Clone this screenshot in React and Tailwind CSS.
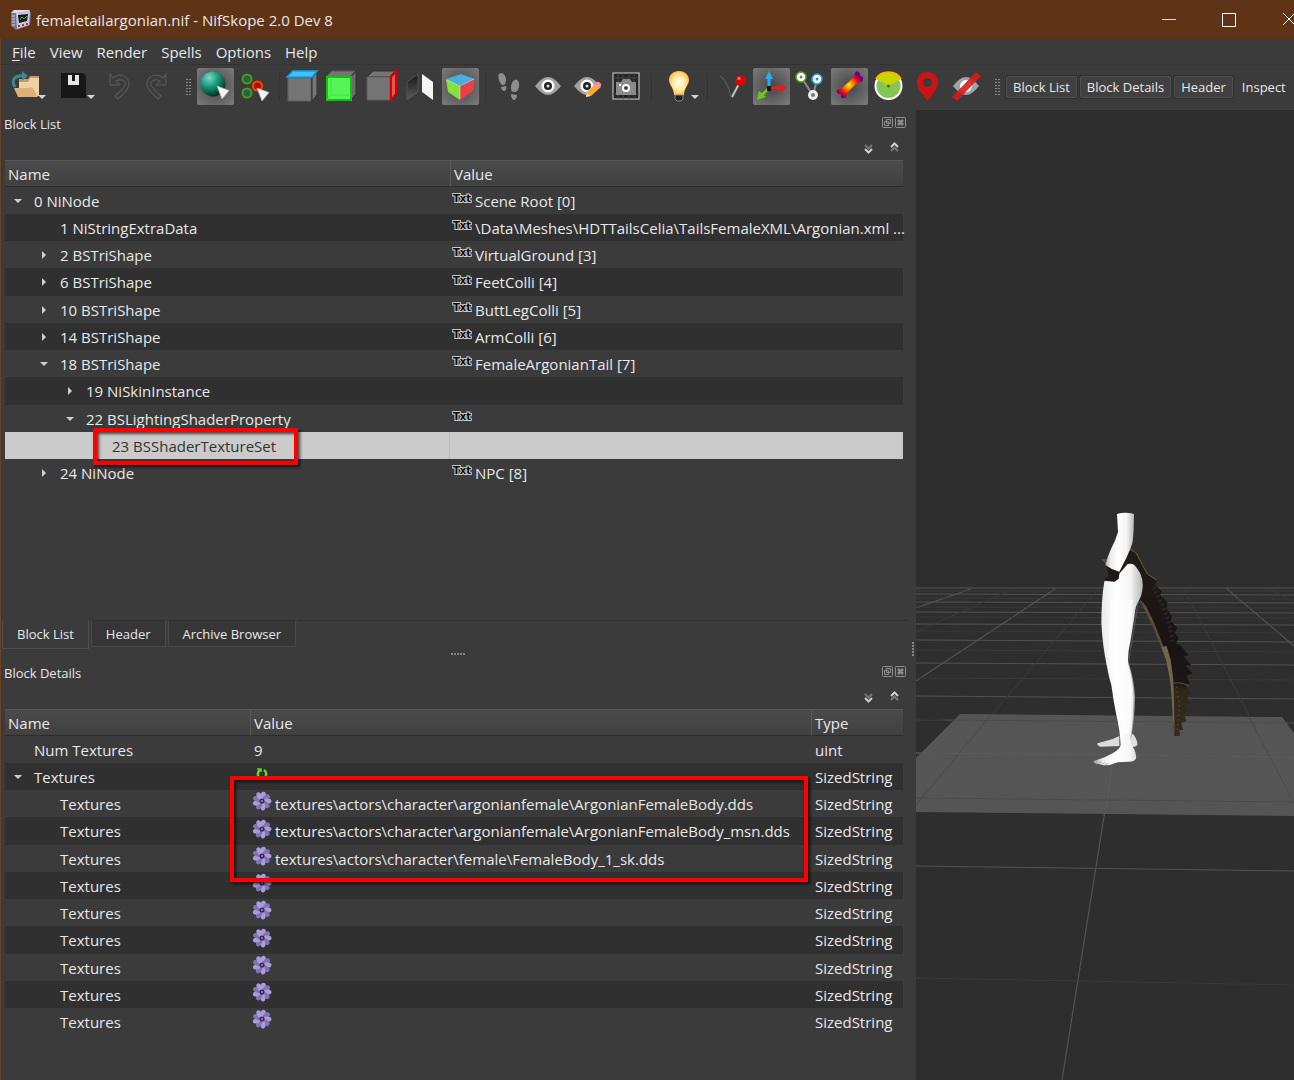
import React, { useState } from 'react';

// ---------- data ----------

const blocks = [
  { id: '0', depth: 0, open: true, name: '0 NiNode', txt: true, value: 'Scene Root [0]' },
  { id: '1', depth: 1, name: '1 NiStringExtraData', txt: true, value: '\\Data\\Meshes\\HDTTailsCelia\\TailsFemaleXML\\Argonian.xml ...' },
  { id: '2', depth: 1, open: false, name: '2 BSTriShape', txt: true, value: 'VirtualGround [3]' },
  { id: '6', depth: 1, open: false, name: '6 BSTriShape', txt: true, value: 'FeetColli [4]' },
  { id: '10', depth: 1, open: false, name: '10 BSTriShape', txt: true, value: 'ButtLegColli [5]' },
  { id: '14', depth: 1, open: false, name: '14 BSTriShape', txt: true, value: 'ArmColli [6]' },
  { id: '18', depth: 1, open: true, name: '18 BSTriShape', txt: true, value: 'FemaleArgonianTail [7]' },
  { id: '19', depth: 2, open: false, name: '19 NiSkinInstance' },
  { id: '22', depth: 2, open: true, name: '22 BSLightingShaderProperty', txt: true, value: '' },
  { id: '23', depth: 3, name: '23 BSShaderTextureSet' },
  { id: '24', depth: 1, open: false, name: '24 NiNode', txt: true, value: 'NPC [8]' },
];

const textures = [
  'textures\\actors\\character\\argonianfemale\\ArgonianFemaleBody.dds',
  'textures\\actors\\character\\argonianfemale\\ArgonianFemaleBody_msn.dds',
  'textures\\actors\\character\\female\\FemaleBody_1_sk.dds',
  '',
  '',
  '',
  '',
  '',
  '',
];

const indent = ['pl-0', 'pl-[26px]', 'pl-[52px]', 'pl-[78px]'];

// ---------- small icons ----------

const AppIcon = () => (
  <svg width="22" height="20" viewBox="0 0 22 20">
    <path d="M1 3 L4 0 L19 0 L21 3 L20 15 L6 20 L1 16 Z" fill="#77738f" />
    <path d="M6 3 L20 1 L19 15 L7 19 Z" fill="#c9c5de" />
    <path d="M1 3 L4 0 L19 0 L20 1 L6 3 Z" fill="#dedbea" />
    <path d="M8 5 L18 4 L17 11 L9 13 Z" fill="#0e1a14" />
    <path d="M10 10 L12 7 L14 9 L17 6" stroke="#3fae5c" fill="none" />
    <path d="M2 6h3M2 9h3M2 12h3M2 15h3" stroke="#d8d5e6" />
    <path d="M8 16h2M12 15h2M16 14h2" stroke="#b0304c" strokeWidth="2" />
  </svg>
);

const Caret = () => <path d="M0 0h8l-4 4z" fill="#d5d5d5" />;

const OpenIcon = () => (
  <svg width="37" height="37" viewBox="0 0 37 37">
    <path d="M10 11h9l2-3h9v20H10z" fill="#c99a5b" />
    <path d="M10 14h9l2-4h9v18H10z" fill="#f0d2a2" />
    <path d="M5 20h14l4-1l6 10H9z" fill="#dcb27a" />
    <path d="M6 19C1 11 7 7 15 8" fill="none" stroke="#3b8796" strokeWidth="3" />
    <path d="M13 3l6 5-6 5z" fill="#3b8796" />
    <g transform="translate(29 27)"><Caret /></g>
  </svg>
);

const SaveIcon = () => (
  <svg width="37" height="37" viewBox="0 0 37 37">
    <path d="M3 5h22l3 3v22H3z" fill="#171717" />
    <path d="M10 7h11v10H10z" fill="#e6e6e6" />
    <path d="M14 7h3v6h-3z" fill="#171717" />
    <g transform="translate(29 27)"><Caret /></g>
  </svg>
);

const UndoShape = () => (
  <path
    d="M6 6v11h10l-4-4c5-3 10 0 9 4c-1 3-6 7-10 11l3 3c5-5 11-9 11-15c0-8-9-12-16-6z"
    fill="#3c3c3c"
    stroke="#545454"
    strokeWidth="1.3"
    strokeLinejoin="round"
  />
);

const UndoIcon = () => (
  <svg width="30" height="37" viewBox="0 0 30 37"><UndoShape /></svg>
);

const RedoIcon = () => (
  <svg width="30" height="37" viewBox="0 0 30 37">
    <g transform="translate(30 0) scale(-1 1)"><UndoShape /></g>
  </svg>
);

const Cursor = () => (
  <path d="M0 0l12 4.500l-7 8.500z" fill="#f4f4f4" stroke="#b5b5b5" strokeWidth=".7" />
);

const SphereIcon = () => (
  <svg width="37" height="37" viewBox="0 0 37 37">
    <defs>
      <radialGradient id="ball" cx=".35" cy=".25" r=".8">
        <stop offset="0" stopColor="#7fd8c2" />
        <stop offset=".45" stopColor="#169a7c" />
        <stop offset="1" stopColor="#03271f" />
      </radialGradient>
    </defs>
    <circle cx="16" cy="16" r="12.500" fill="url(#ball)" />
    <g transform="translate(20 18)"><Cursor /></g>
  </svg>
);

const VertexIcon = () => (
  <svg width="37" height="37" viewBox="0 0 37 37">
    <circle cx="11" cy="11" r="4.500" fill="#1f6256" stroke="#4f9a08" strokeWidth="2" />
    <circle cx="11" cy="25" r="4.500" fill="#1f6256" stroke="#4f9a08" strokeWidth="2" />
    <circle cx="21.500" cy="18" r="4.500" fill="#c00000" stroke="#f04a00" strokeWidth="2" />
    <g transform="translate(21 20)"><Cursor /></g>
  </svg>
);

const CubeTopIcon = () => (
  <svg width="37" height="37" viewBox="0 0 37 37">
    <path d="M6 10h23v23H6z" fill="#757575" stroke="#606060" />
    <path d="M30 10l5-6v23l-5 6z" fill="#757575" stroke="#303030" />
    <path d="M5 9l6-6h24l-5 6z" fill="#3fc3ff" stroke="#159fdd" strokeWidth="1.500" />
  </svg>
);

const CubeFrontIcon = () => (
  <svg width="37" height="37" viewBox="0 0 37 37">
    <path d="M4 9l6-6h23l-5 6z" fill="#757575" stroke="#555" />
    <path d="M29 9l5-6v23l-5 6z" fill="#6c6c6c" stroke="#303030" />
    <path d="M5 9h24v23H5z" fill="#55f555" stroke="#0fc20f" strokeWidth="2" />
    <path d="M9 9v18h20M9 27l-4 5" fill="none" stroke="#48e048" />
  </svg>
);

const CubeSideIcon = () => (
  <svg width="37" height="37" viewBox="0 0 37 37">
    <path d="M5 9l6-6h22l-5 6z" fill="#757575" stroke="#303030" />
    <path d="M5 9h23v23H5z" fill="#757575" stroke="#5c5c5c" />
    <path d="M29 9l5-6v23l-5 6z" fill="#ef5054" stroke="#c90505" strokeWidth="2" />
  </svg>
);

const FlipIcon = () => (
  <svg width="37" height="37" viewBox="0 0 37 37">
    <defs>
      <linearGradient id="flip" x1="0" y1="0" x2="0" y2="1">
        <stop offset="0" stopColor="#161616" />
        <stop offset="1" stopColor="#5a5a5a" />
      </linearGradient>
    </defs>
    <path d="M5 14l11-8v18l-11 8z" fill="url(#flip)" stroke="#555" />
    <path d="M20 6l11 8v18l-11-8z" fill="#f5f5f5" />
  </svg>
);

const RgbCubeIcon = () => (
  <svg width="37" height="37" viewBox="0 0 37 37">
    <path d="M4 11l15-5l14 5l-15 7z" fill="#48aede" />
    <path d="M4 11l14 7v14l-12-8z" fill="#83e23c" />
    <path d="M33 11l-15 7v14l13-9z" fill="#e84046" />
    <path d="M5 12l13 6v13M18 18l14-7" fill="none" stroke="#fff" strokeOpacity=".4" />
  </svg>
);

const FootIcon = () => (
  <svg width="37" height="37" viewBox="0 0 37 37" fill="#8e8e8e">
    <path d="M8 6c3-3 7 1 7 6c0 3-1 5-3 5c-3 0-6-8-4-11z" />
    <path d="M10 19l5-1c1 3-1 5-2 5s-3-2-3-4z" />
    <path d="M26 12c-4-1-6 4-6 8c0 3 1 4 4 4c4 0 6-10 2-12z" />
    <path d="M20 26l6 1c0 3-2 5-3 5s-3-2-3-6z" />
  </svg>
);

const EyeShape = () => (
  <>
    <path d="M5 18c5-6 9-9 13-9s8 3 13 9c-5 6-9 9-13 9s-8-3-13-9z" fill="#a2a2a2" />
    <circle cx="18" cy="18" r="6.500" fill="#fff" />
    <circle cx="18" cy="18" r="4" fill="#222" />
    <circle cx="18" cy="18" r="1.500" fill="#ddd" />
  </>
);

const EyeIcon = () => (
  <svg width="37" height="37" viewBox="0 0 37 37"><EyeShape /></svg>
);

const EyeEditIcon = () => (
  <svg width="37" height="37" viewBox="0 0 37 37">
    <EyeShape />
    <path d="M17 29l1-5l9-9l5 4l-10 9z" fill="#f9a73a" />
    <path d="M26 16l2-2c2-1 5 2 4 4l-2 2z" fill="#f590a0" />
    <path d="M17 29l1-4l3 3z" fill="#f5e0c5" />
  </svg>
);

const CameraIcon = () => (
  <svg width="37" height="37" viewBox="0 0 37 37">
    <path d="M5 5h26v26H5z" fill="#252525" stroke="#a3a3a3" strokeWidth="1.500" />
    <path d="M10 5v26M15 5v26M21 5v26M26 5v26M5 10h26M5 26h26" stroke="#464646" />
    <path d="M8 14h5l2-3h7l2 3h4v13H8z" fill="#8b8b8b" />
    <circle cx="18" cy="20" r="3" fill="#444" stroke="#fff" strokeWidth="2" />
    <path d="M11 16h2v2h-2z" fill="#fff" />
  </svg>
);

const BulbIcon = () => (
  <svg width="41" height="37" viewBox="0 0 41 37">
    <defs>
      <radialGradient id="bulb">
        <stop offset="0" stopColor="#fffdf0" />
        <stop offset=".6" stopColor="#ffeba8" />
        <stop offset="1" stopColor="#ffc04a" />
      </radialGradient>
    </defs>
    <path d="M19 3c-6 0-10 4-10 9c0 5 5 8 5 15h10c0-7 5-10 5-15c0-5-4-9-10-9z" fill="url(#bulb)" />
    <path d="M15 27h8v4l-2 2h-4l-2-2z" fill="#222" stroke="#888" />
    <g transform="translate(31 27)"><Caret /></g>
  </svg>
);

const PinIcon = () => (
  <svg width="37" height="37" viewBox="0 0 37 37">
    <path d="M6 8c6 4 9 11 11 21" fill="none" stroke="#555" strokeWidth="1.500" />
    <path d="M18 29l8-15" stroke="#c4c4c4" strokeWidth="2" />
    <circle cx="26.500" cy="12.500" r="5.500" fill="#d00808" />
    <circle cx="25" cy="10.500" r="1.800" fill="#ff6060" />
  </svg>
);

const AxesIcon = () => (
  <svg width="37" height="37" viewBox="0 0 37 37">
    <path d="M16 20V8" stroke="#22aef0" strokeWidth="3" />
    <path d="M12 11l4-8l4 8z" fill="#22aef0" />
    <path d="M16 20h13" stroke="#f01818" strokeWidth="3" />
    <path d="M27 16l7 4l-7 4z" fill="#f01818" />
    <path d="M16 20l-7 7" stroke="#6bc91c" strokeWidth="3" />
    <path d="M4 32l2-9l7 6z" fill="#6bc91c" />
    <path d="M14 18h4v5h-4z" fill="#161616" />
  </svg>
);

const NodesIcon = () => (
  <svg width="37" height="37" viewBox="0 0 37 37">
    <path d="M9 9l12 18l4-15" fill="none" stroke="#8a8a8a" strokeWidth="2" />
    <circle cx="9" cy="9" r="3" fill="#777" stroke="#fff" strokeWidth="3" />
    <circle cx="9" cy="9" r="5" fill="none" stroke="#55a814" strokeWidth="1.500" />
    <circle cx="25" cy="11" r="3" fill="#777" stroke="#fff" strokeWidth="3" />
    <circle cx="25" cy="11" r="5" fill="none" stroke="#1ba4ee" strokeWidth="1.500" />
    <circle cx="21" cy="27" r="3.500" fill="#777" stroke="#eee" strokeWidth="3" />
  </svg>
);

const BoneIcon = () => (
  <svg width="37" height="37" viewBox="0 0 37 37">
    <defs>
      <radialGradient id="bone" gradientUnits="userSpaceOnUse" cx="18" cy="17" r="16">
        <stop offset="0" stopColor="#fff200" />
        <stop offset=".3" stopColor="#ff7a00" />
        <stop offset=".6" stopColor="#f00010" />
        <stop offset=".85" stopColor="#6a0088" />
      </radialGradient>
    </defs>
    <path
      d="M8 21c1 0 2 0 4-2l10-9c2-2 1-3 2-5c2-3 6-1 5 3c4 0 4 5 1 6c-2 1-3 0-5 2l-9 9c-1 2 0 4-2 5c-2 1-5 0-4-4c-4 1-6-4-2-5z"
      fill="url(#bone)"
    />
  </svg>
);

const AngleIcon = () => (
  <svg width="37" height="37" viewBox="0 0 37 37">
    <circle cx="18.500" cy="18" r="13" fill="#86c552" stroke="#fff" strokeWidth="2" />
    <path d="M18.500 18L6 11c5-9 20-9 25 0z" fill="#c7d600" />
    <path d="M6 11c5-9 20-9 25 0" fill="none" stroke="#f5b400" strokeWidth="2" />
    <circle cx="18.500" cy="18" r="1.500" fill="#4c6a20" />
  </svg>
);

const MarkerIcon = () => (
  <svg width="37" height="37" viewBox="0 0 37 37">
    <path
      d="M18.500 4C12 4 8 8 8 14.500C8 21 13 25 18.500 33C24 25 29 21 29 14.500C29 8 25 4 18.500 4zM18.500 10a4.500 4.500 0 1 1 0 9a4.500 4.500 0 1 1 0-9z"
      fill="#c81414"
      fillRule="evenodd"
    />
  </svg>
);

const EyeOffIcon = () => (
  <svg width="37" height="37" viewBox="0 0 37 37">
    <path d="M5 18c5-6 9-9 13-9s8 3 13 9c-5 6-9 9-13 9s-8-3-13-9z" fill="#a2a2a2" />
    <circle cx="18" cy="18" r="6" fill="#fff" />
    <path d="M4 29l24-25l5 4L9 33z" fill="#d81c1c" fillOpacity=".9" />
  </svg>
);

const Grip = () => (
  <svg width="5" height="16" viewBox="0 0 5 16" className="shrink-0">
    {[0, 3, 6, 9, 12, 15].map((y) => (
      <path key={y} d={`M0 ${y}.5h2M3 ${y}.5h2`} stroke="#8a8a8a" />
    ))}
  </svg>
);

const TxtIcon = () => (
  <svg width="20" height="20" viewBox="0 0 20 20" className="shrink-0">
    <text
      x="10"
      y="14"
      textAnchor="middle"
      fontFamily="DejaVu Sans"
      fontSize="10"
      fontWeight="700"
      fill="#0a0a0a"
      stroke="#c9c9c9"
      strokeWidth="2"
      paintOrder="stroke"
    >
      Txt
    </text>
  </svg>
);

const FlowerIcon = () => (
  <svg width="20" height="20" viewBox="0 0 20 20" className="shrink-0">
    {[0, 40, 80, 120, 160, 200, 240, 280, 320].map((a, i) => (
      <ellipse
        key={a}
        cx="10"
        cy="4.500"
        rx="2.600"
        ry="4"
        fill={i % 2 ? '#8173b8' : '#ab9cda'}
        transform={`rotate(${a + 12} 10 10)`}
      />
    ))}
    <circle cx="10" cy="10" r="2.600" fill="#3a2762" />
    <circle cx="10" cy="10" r="1" fill="#b89a3a" />
  </svg>
);

const RefreshIcon = () => (
  <svg width="20" height="20" viewBox="0 0 20 20" className="shrink-0" fill="none" stroke="#5fdb2a" strokeWidth="2.500">
    <path d="M8 6c-3 2-3 6 0 8" />
    <path d="M12 14c3-2 3-6 0-8" />
    <path d="M5 5h4v3M15 15h-4v-3" strokeWidth="1.500" />
  </svg>
);

const DockIcon = ({ kind }) => (
  <svg width="11" height="11" viewBox="0 0 11 11" fill="none" stroke="#8d8d8d">
    <rect x=".5" y=".5" width="10" height="10" rx="1" />
    {kind === 'float' ? (
      <path d="M4.500 2.500h4v4h-4zM2.500 4.500h4v4h-4z" />
    ) : (
      <path d="M3 3l5 5M8 3l-5 5" strokeWidth="2.500" />
    )}
  </svg>
);

const Chevrons = ({ up }) => (
  <svg width="9" height="11" viewBox="0 0 9 11" fill="none" strokeWidth="2">
    <path d={up ? 'M1 9l3.500-3.500L8 9' : 'M1 2l3.500 3.500L8 2'} stroke="#777" />
    <path d={up ? 'M1 5l3.500-3.500L8 5' : 'M1 6l3.500 3.500L8 6'} stroke="#cfcfcf" />
  </svg>
);

// ---------- toolbar ----------

const ToolButton = ({ label, active, children }) => (
  <button
    aria-label={label}
    className={
      active
        ? 'h-[37px] shrink-0 rounded-xs bg-radial from-[#474747] to-[#7c7c7c]'
        : 'h-[37px] shrink-0'
    }
  >
    {children}
  </button>
);

const Separator = () => <div className="mx-[2px] h-7 w-px shrink-0 bg-[#343434]" />;

const Toolbar = () => (
  <div className="flex h-[46px] shrink-0 items-center overflow-hidden border-t border-[#333] pb-[2px] pl-2">
    <div className="flex">
      <ToolButton label="Open"><OpenIcon /></ToolButton>
      <div className="w-3" />
      <ToolButton label="Save"><SaveIcon /></ToolButton>
      <div className="w-[9px]" />
      <ToolButton label="Undo"><UndoIcon /></ToolButton>
      <div className="w-2" />
      <ToolButton label="Redo"><RedoIcon /></ToolButton>
    </div>
    <div className="ml-[14px] mr-[6px] flex"><Grip /></div>
    <div className="flex gap-[2px]">
      <ToolButton label="Select object" active><SphereIcon /></ToolButton>
      <ToolButton label="Select vertex"><VertexIcon /></ToolButton>
    </div>
    <div className="ml-1 flex"><Separator /></div>
    <div className="flex gap-[3px]">
      <ToolButton label="Top view"><CubeTopIcon /></ToolButton>
      <ToolButton label="Front view"><CubeFrontIcon /></ToolButton>
      <ToolButton label="Side view"><CubeSideIcon /></ToolButton>
      <ToolButton label="Flip view"><FlipIcon /></ToolButton>
      <ToolButton label="Perspective" active><RgbCubeIcon /></ToolButton>
    </div>
    <div className="ml-1 flex"><Separator /></div>
    <div className="ml-[3px] flex gap-[2px]">
      <ToolButton label="Walk"><FootIcon /></ToolButton>
      <ToolButton label="Show"><EyeIcon /></ToolButton>
      <ToolButton label="Edit view"><EyeEditIcon /></ToolButton>
      <ToolButton label="Screenshot"><CameraIcon /></ToolButton>
    </div>
    <div className="ml-1 flex"><Separator /></div>
    <div className="ml-[6px] flex">
      <ToolButton label="Lighting"><BulbIcon /></ToolButton>
    </div>
    <div className="ml-1 flex"><Separator /></div>
    <div className="ml-1 flex gap-[2px]">
      <ToolButton label="Pin"><PinIcon /></ToolButton>
      <ToolButton label="Axes" active><AxesIcon /></ToolButton>
      <ToolButton label="Nodes"><NodesIcon /></ToolButton>
      <ToolButton label="Skin" active><BoneIcon /></ToolButton>
      <ToolButton label="Constraints"><AngleIcon /></ToolButton>
      <ToolButton label="Markers"><MarkerIcon /></ToolButton>
      <ToolButton label="Hidden"><EyeOffIcon /></ToolButton>
    </div>
    <div className="ml-[10px] mr-[6px] flex"><Grip /></div>
    <div className="flex gap-[3px] text-[13px] leading-5">
      {['Block List', 'Block Details', 'Header'].map((name) => (
        <button
          key={name}
          className="h-[22px] shrink-0 whitespace-nowrap rounded-xs border border-[#4e4e4e] bg-[#404040] px-[6px] shadow-[0_0_0_1px_#303030]"
        >
          {name}
        </button>
      ))}
      <button className="h-[22px] shrink-0 px-[6px]">Inspect</button>
    </div>
  </div>
);

// ---------- docks ----------

const DockHeader = ({ title }) => (
  <>
    <div className="flex h-[27px] shrink-0 items-center justify-between pl-[3px] pr-[10px]">
      <h2 className="text-[13px] leading-5">{title}</h2>
      <div className="mb-[3px] flex gap-[2px]">
        <button aria-label={`Float ${title}`}><DockIcon kind="float" /></button>
        <button aria-label={`Close ${title}`}><DockIcon kind="close" /></button>
      </div>
    </div>
    <div className="flex h-[23px] shrink-0 items-center justify-end gap-[17px] pr-[17px]">
      <button aria-label="Expand all"><Chevrons /></button>
      <button aria-label="Collapse all" className="mb-[3px]"><Chevrons up /></button>
    </div>
  </>
);

const HeadCell = ({ children, first }) => (
  <th
    className={
      first
        ? 'h-[27px] border-b border-t border-b-[#2c2c2c] border-t-[#565656] pl-[3px] text-left font-normal'
        : 'h-[27px] border-b border-l border-t border-b-[#2c2c2c] border-l-[#5a5a5a] border-t-[#565656] pl-[3px] text-left font-normal'
    }
  >
    {children}
  </th>
);

const NameCell = ({ depth, open, name }) => (
  <div className={`flex h-full items-center ${indent[depth]}`}>
    <div className="flex w-[26px] shrink-0 justify-center">
      {open !== undefined && (
        <button aria-label={`Toggle ${name}`}>
          <svg width="8" height="8" viewBox="0 0 8 8" fill="#d0d0d0">
            <path d={open ? 'M0 2h8l-4 4z' : 'M2 0v8l4-4z'} />
          </svg>
        </button>
      )}
    </div>
    <span className="whitespace-nowrap pl-[3px]">{name}</span>
  </div>
);

const ValueCell = ({ icon, children }) => (
  <div className="flex h-full items-center gap-[3px] whitespace-nowrap pl-[2px]">
    {icon && <div className="mb-[5px] flex">{icon}</div>}
    <span>{children}</span>
  </div>
);

const rowClass = 'h-[27px] even:bg-[#303030] nth-[4n]:h-[28px]';

const BlockList = () => {
  const [selected, setSelected] = useState('23');

  return (
    <div className="relative ml-1 mr-[13px]">
      <table className="w-full table-fixed border-separate border-spacing-0">
        <colgroup>
          <col className="w-[445px]" />
          <col />
        </colgroup>
        <thead className="bg-linear-to-b from-[#4b4b4b] to-[#404040]">
          <tr>
            <HeadCell first>Name</HeadCell>
            <HeadCell>Value</HeadCell>
          </tr>
        </thead>
        <tbody>
          {blocks.map((b) => (
            <tr
              key={b.id}
              onClick={() => setSelected(b.id)}
              className={
                selected === b.id
                  ? 'h-[27px] bg-[#cbcbcb] text-[#333] nth-[4n]:h-[28px]'
                  : rowClass
              }
            >
              <td className={selected === b.id ? 'h-[inherit] border-r border-[#bdbdbd] p-0' : 'h-[inherit] p-0'}>
                <NameCell depth={b.depth} open={b.open} name={b.name} />
              </td>
              <td className="h-[inherit] p-0">
                <ValueCell icon={b.txt && <TxtIcon />}>{b.value}</ValueCell>
              </td>
            </tr>
          ))}
        </tbody>
      </table>
      {/* callout round the selected block */}
      <div className="pointer-events-none absolute left-[88px] top-[268px] h-[37px] w-[205px] border-4 border-[#fe0000] shadow-[2px_2px_3px_#000a,inset_2px_2px_3px_#000a]" />
    </div>
  );
};

const BlockDetails = () => (
  <div className="relative ml-1 mr-[13px]">
    <table className="w-full table-fixed border-separate border-spacing-0">
      <colgroup>
        <col className="w-[245px]" />
        <col />
        <col className="w-[92px]" />
      </colgroup>
      <thead className="bg-linear-to-b from-[#4b4b4b] to-[#404040]">
        <tr>
          <HeadCell first>Name</HeadCell>
          <HeadCell>Value</HeadCell>
          <HeadCell>Type</HeadCell>
        </tr>
      </thead>
      <tbody>
        <tr className={rowClass}>
          <td className="h-[inherit] p-0"><NameCell depth={0} name="Num Textures" /></td>
          <td className="p-0 pl-1">9</td>
          <td className="p-0 pl-1">uint</td>
        </tr>
        <tr className={rowClass}>
          <td className="h-[inherit] p-0"><NameCell depth={0} open name="Textures" /></td>
          <td className="h-[inherit] p-0"><ValueCell icon={<RefreshIcon />} /></td>
          <td className="p-0 pl-1">SizedString</td>
        </tr>
        {textures.map((path, i) => (
          <tr key={i} className={rowClass}>
            <td className="h-[inherit] p-0"><NameCell depth={1} name="Textures" /></td>
            <td className="h-[inherit] p-0"><ValueCell icon={<FlowerIcon />}>{path}</ValueCell></td>
            <td className="p-0 pl-1">SizedString</td>
          </tr>
        ))}
      </tbody>
    </table>
    {/* callout round the texture paths */}
    <div className="pointer-events-none absolute left-[225px] right-[95px] top-[67px] h-[106px] border-4 border-[#fe0000] shadow-[2px_2px_3px_#000a,inset_2px_2px_3px_#000a]" />
  </div>
);

const DockTabs = () => (
  <div role="tablist" className="mr-2 flex h-[29px] shrink-0 items-start gap-[2px] text-[13px] leading-5">
    <button role="tab" aria-selected="true" className="ml-px h-[29px] border-x border-b border-[#4c4c4c] px-[14px]">
      Block List
    </button>
    <button role="tab" aria-selected="false" className="h-[27px] border border-[#4a4a4a] border-t-[#303030] bg-[#363636] px-[14px]">
      Header
    </button>
    <button role="tab" aria-selected="false" className="h-[27px] border border-[#4a4a4a] border-t-[#303030] bg-[#363636] px-[14px]">
      Archive Browser
    </button>
    <div className="flex-1 border-t border-[#303030]" />
  </div>
);

// ---------- 3D view ----------

const major = [
  [588, 588], [594, 595], [602, 603], [612, 613], [624, 625], [640, 642], [663, 665], [696, 699], [753, 757], [866, 871],
];
const minor = [
  [591, 591], [598, 599], [607, 608], [617, 618], [631, 633], [650, 652], [678, 680], [720, 723], [798, 802], [978, 985],
];

const Viewport = () => (
  <svg
    viewBox="916 110 378 970"
    preserveAspectRatio="xMidYMid slice"
    className="h-full w-full bg-[#2e2e2e]"
    role="img"
    aria-label="Render view"
  >
    <defs>
      <linearGradient id="leg" x1="0" x2="1">
        <stop offset="0" stopColor="#a9a9a9" />
        <stop offset=".18" stopColor="#ececec" />
        <stop offset=".45" stopColor="#fff" />
        <stop offset=".75" stopColor="#f4f4f4" />
        <stop offset="1" stopColor="#b5b5b5" />
      </linearGradient>
      <linearGradient id="tail" x1="0" y1="0" x2="0" y2="1">
        <stop offset="0" stopColor="#211b15" />
        <stop offset=".5" stopColor="#181415" />
        <stop offset=".72" stopColor="#1b1717" />
        <stop offset=".76" stopColor="#2f281a" />
        <stop offset="1" stopColor="#332a1b" />
      </linearGradient>
    </defs>
    <g stroke="#535353">
      {major.map(([l, r]) => <path key={l} d={`M916 ${l}L1294 ${r}`} />)}
      <path d="M971 589L916 608M1055 589L916 681M1139 597L1062 1080M1227 589L1294 646" strokeWidth="1.200" />
    </g>
    <g stroke="#3a3a3a">
      {minor.map(([l, r]) => <path key={l} d={`M916 ${l}L1294 ${r}`} />)}
      <path d="M1013 589L916 632M1098 589L916 805M1184 589L1294 803M1270 589L1294 602" />
    </g>
    <path d="M960 714L1282 717L1294 733V816L916 812V758z" fill="#555" />
    <g stroke="#4b4b4b" fill="none">
      <path d="M943 720L1294 723M916 798L1294 802M991 715L916 805M1249 717L1294 803" />
      <path d="M916 753L1294 757M1112 765L1105 814" stroke="#5b5b5b" />
    </g>

    {/* body and tail, drawn at three times their size */}
    <g transform="translate(1060 500) scale(.33333)">
      <path d="M122 177L138 178L148 172L212 142L240 180L205 200L178 222L150 205z" fill="#5c4c35" />
      <path d="M165 185L212 150L228 195L203 195L178 220L150 205z" fill="#211c18" />
      <path
        d="M208 145L225 155L245 185L262 220L292 242L284 254L306 274L300 286L322 306L320 326L336 348L332 364L353 384L344 398L356 415L348 430L362 436L386 466L370 468L394 496L376 496L398 522L380 526L390 552L372 552L398 584L380 586L390 612L374 612L386 636L370 638L380 664L364 668L369 690L358 690L360 707L343 708L338 650L335 590L330 540L318 480L304 440L280 375L255 325L234 296L246 260L225 195z"
        fill="url(#tail)"
      />
      <path d="M236 294L258 318L282 368L306 428L310 440L303 440L278 378L250 322z" fill="#5e4f38" />
      <path d="M303 440L320 438L332 480L340 540L342 600L344 706L338 650L335 590L330 540L318 480z" fill="#756549" />
      <path d="M208 147L228 158L262 222L290 240" fill="none" stroke="#6f5d40" strokeWidth="3" />
      <path d="M336 550Q360 544 388 558" fill="none" stroke="#5d5036" strokeWidth="3" />
      <path d="M280 262L300 300L325 360L338 425" fill="none" stroke="#2c2524" strokeWidth="12" strokeDasharray="6 8" />
      <path d="M350 560L358 620L352 690" fill="none" stroke="#4a3e28" strokeWidth="6" strokeDasharray="5 9" />

      <path d="M178 708Q160 718 140 722L112 730Q112 738 122 740L178 738zM214 700L222 705Q234 725 232 736Q224 744 210 740z" fill="#dcdcdc" />
      <path d="M200 470Q222 530 225 590Q224 660 214 710L195 700z" fill="#9c9c9c" />
      <path
        d="M203 192Q216 190 222 194Q232 204 240 218Q250 240 248 262Q246 288 236 302Q226 316 224 345L212 420Q203 455 204 490Q220 540 221 590Q220 660 212 712Q212 736 222 746Q230 762 228 776Q222 785 208 785L172 787Q152 797 132 796L104 790Q98 784 104 782L134 772L158 760Q180 748 182 735Q180 690 168 640Q160 600 154 555Q146 530 140 495Q128 440 124 370Q124 300 133 244L146 242L174 238L178 221z"
        fill="url(#leg)"
      />
      <path d="M150 300L220 300L206 430L202 500L216 570L210 700L190 700L165 560L146 470z" fill="#fff" fillOpacity=".6" />
      <path d="M104 787l12-4M114 791l12-6M124 794l12-7M134 796l10-7" stroke="#999" strokeWidth="2" />
      <path d="M140 200L150 203L178 220L176 236L164 245L140 243L134 236L146 230z" fill="#1d1a18" />
      <path
        d="M171 42Q196 34 222 42L221 88Q220 112 217 130Q210 150 200 172L178 215Q156 210 136 195Q144 165 154 145Q168 118 174 96z"
        fill="url(#leg)"
      />
    </g>
  </svg>
);

// ---------- window ----------

const App = () => (
  <div className="flex h-screen min-h-[1080px] flex-col overflow-hidden bg-[#3b3b3b] font-['Open_Sans','Noto_Sans',sans-serif] text-[15px] leading-5 text-[#e8e8e8]">
    <header className="flex h-[39px] shrink-0 items-center bg-[#5f3316] pl-[10px]">
      <AppIcon />
      <h1 className="flex-1 pl-1">femaletailargonian.nif - NifSkope 2.0 Dev 8</h1>
      <div className="-mr-[2px] flex items-center gap-[46px]">
        <button aria-label="Minimize">
          <svg width="14" height="14" viewBox="0 0 14 14" stroke="#e0d8d0"><path d="M0 6.500h14" /></svg>
        </button>
        <button aria-label="Maximize">
          <svg width="14" height="14" viewBox="0 0 14 14" stroke="#fff" fill="none"><path d="M.5 .5h13v13H.5z" /></svg>
        </button>
        <button aria-label="Close">
          <svg width="14" height="14" viewBox="0 0 14 14" stroke="#fff"><path d="M1 0l12 12M13 0L1 12" /></svg>
        </button>
      </div>
    </header>

    <div className="flex min-h-0 flex-1 flex-col border-l border-[#6b4223]">
      <nav className="flex h-[25px] shrink-0 items-center gap-[14px] pl-[11px]">
        <button><span className="underline underline-offset-2">F</span>ile</button>
        <button>View</button>
        <button>Render</button>
        <button>Spells</button>
        <button>Options</button>
        <button>Help</button>
      </nav>

      <Toolbar />

      <main className="grid min-h-0 flex-1 grid-cols-[915fr_378fr]">
        <div className="flex min-h-0 min-w-0">
          <div className="flex min-w-0 flex-1 flex-col">
            <section className="flex min-h-0 flex-[549] basis-0 flex-col">
              <DockHeader title="Block List" />
              <BlockList />
              <div className="flex-1" />
              <DockTabs />
              <div className="flex h-[10px] shrink-0 items-center justify-center">
                <svg width="15" height="2" viewBox="0 0 15 2" fill="#858585">
                  {[0, 3, 6, 9, 12].map((x) => <rect key={x} x={x} width="2" height="2" />)}
                </svg>
              </div>
            </section>
            <section className="flex min-h-0 flex-[421] basis-0 flex-col">
              <DockHeader title="Block Details" />
              <BlockDetails />
            </section>
          </div>
          <div className="-ml-1 mt-[109px] flex w-1 items-center">
            <svg width="2" height="15" viewBox="0 0 2 15" fill="#858585">
              {[0, 3, 6, 9, 12].map((y) => <rect key={y} y={y} width="2" height="2" />)}
            </svg>
          </div>
        </div>
        <Viewport />
      </main>
    </div>
  </div>
);

export default App;
